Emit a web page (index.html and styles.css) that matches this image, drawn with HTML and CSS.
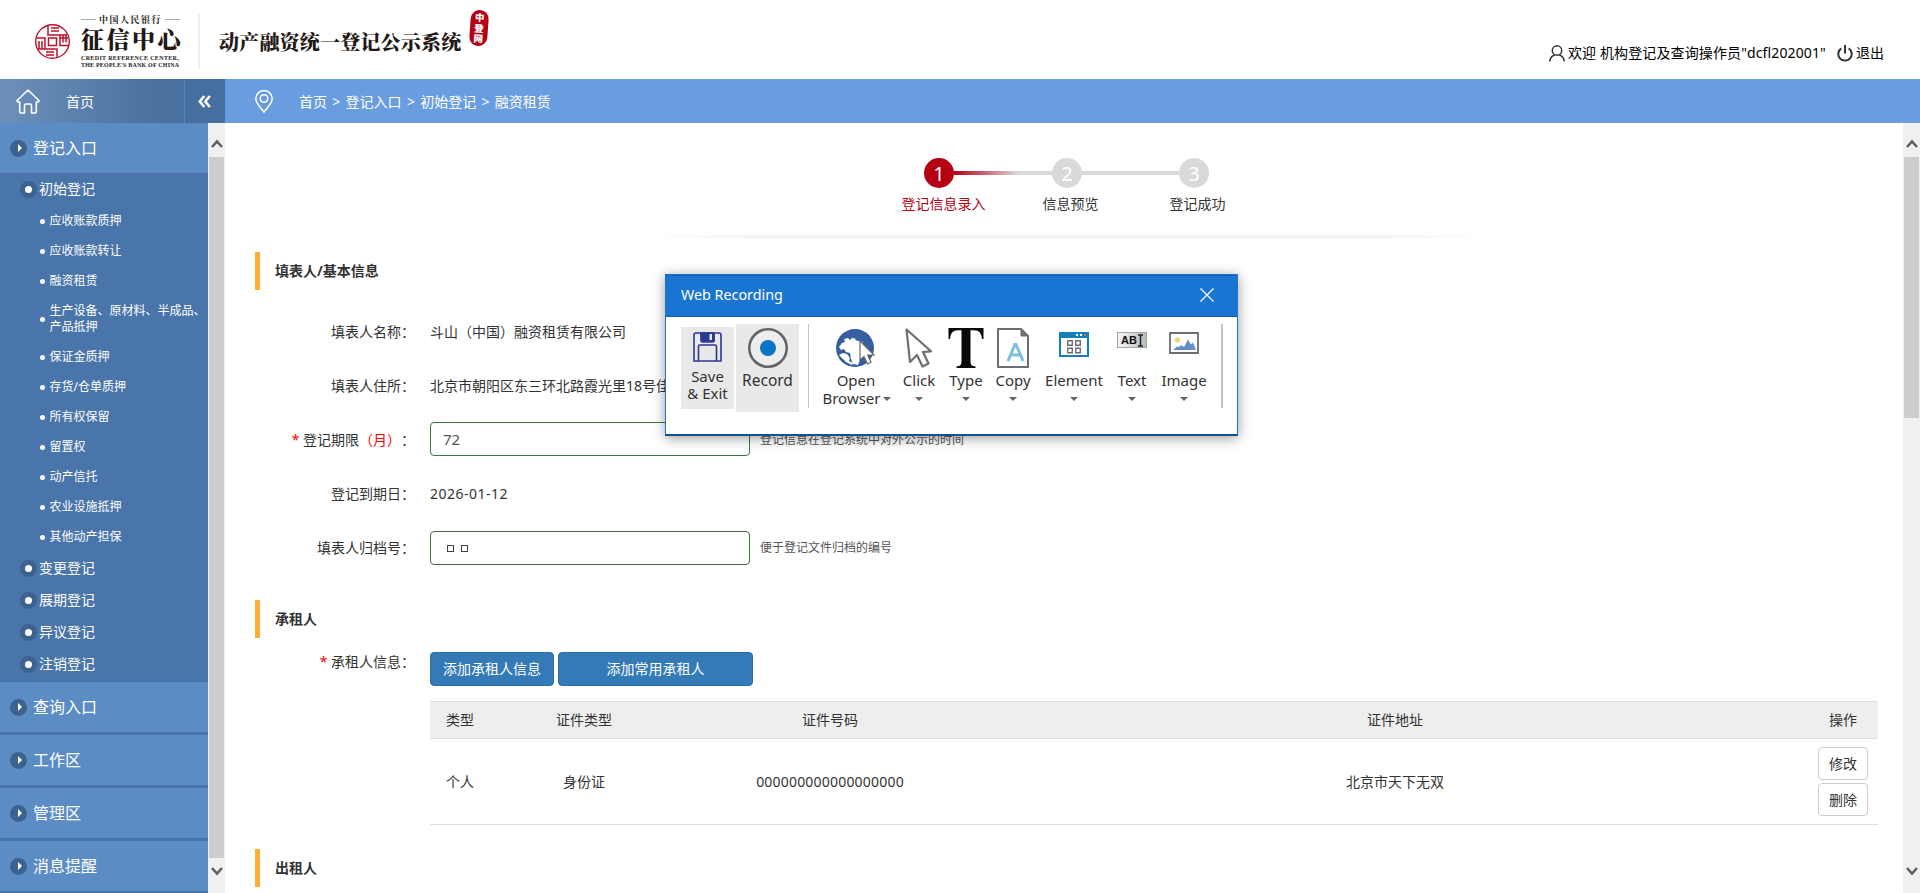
FILE: index.html
```html
<!DOCTYPE html>
<html lang="zh-CN">
<head>
<meta charset="utf-8">
<title>动产融资统一登记公示系统</title>
<link rel="stylesheet" href="styles.css">
</head>
<body>
<header class="header">
  <svg class="emblem" width="36" height="36" viewBox="0 0 36 36" fill="none" stroke="#b8132b" stroke-width="1.5">
    <circle cx="17.500" cy="17.500" r="16.800" stroke-width="1.400"/>
    <path d="M13.500 14h8v7.500h-8zM13 1.500V11h19M16 4h8M16 7h8M22 33.500V25H3M11 28h8M11 31h8M1.500 14H10v11M4 17v7.500M7 17v7.500M33.500 21.500H25V11M31 18.500V11.500M28 18.500V11.500M25 14h8"/>
  </svg>
  <div class="brand">
    <div class="brand-top"><i></i><span>中国人民银行</span><i></i></div>
    <div class="brand-name">征信中心</div>
    <div class="brand-en"><span class="en1">CREDIT REFERENCE CENTER,</span><span class="en2">THE PEOPLE'S BANK OF CHINA</span></div>
  </div>
  <div class="brand-line"></div>
  <h1 class="system">动产融资统一登记公示系统</h1>
  <div class="seal"><span>中</span><span>登</span><span>网</span></div>
  <div class="user">
    <svg width="16" height="17" viewBox="0 0 16 17" fill="none" stroke="#333" stroke-width="1.5"><circle cx="8" cy="5.500" r="4.700"/><path d="M.8 16.500c.3-3.600 2.200-5.700 5-6.700M15.200 16.500c-.3-3.600-2.200-5.700-5-6.700"/></svg>
    <span class="welcome">欢迎 机构登记及查询操作员"dcfl202001"</span>
    <svg class="power" width="16" height="17" viewBox="0 0 16 17" fill="none" stroke="#333" stroke-width="2"><path d="M4.300 3.300a6.700 6.700 0 1 0 7.400 0M8 0v8.500"/></svg>
    <span>退出</span>
  </div>
</header>
<div class="topbar">
  <div class="home">
    <svg width="25" height="25" viewBox="0 0 25 25" fill="none" stroke="#fff" stroke-width="1.600" stroke-linejoin="round"><path d="M12 1L.9 11.800c0 1 1 1.500 2.800 1.200v9.500c0 .8.500 1.500 1.500 1.500h3.300v-7.500c0-1 .5-1.500 1.500-1.500h4c1 0 1.500.5 1.500 1.500V24h3.300c1 0 1.500-.7 1.500-1.500V13c1.800.3 2.800-.2 2.800-1.200z"/></svg>
    <span>首页</span>
  </div>
  <div class="collapse"><svg width="13" height="13" viewBox="0 0 13 13" fill="none" stroke="#fff" stroke-width="2.600"><path d="M6.300 1L1.800 6.500l4.500 5.500M11.800 1L7.300 6.500l4.500 5.500"/></svg></div>
  <nav class="crumbs">
    <svg width="18" height="23" viewBox="0 0 18 23" fill="none" stroke="#fff" stroke-width="1.500"><path d="M9 22C6 18 .8 13.500.8 8.800a8.200 8.200 0 0 1 16.400 0C17.200 13.500 12 18 9 22z"/><circle cx="9" cy="8.500" r="3.800"/></svg>
    <span>首页</span><b>&gt;</b><span>登记入口</span><b>&gt;</b><span>初始登记</span><b>&gt;</b><span>融资租赁</span>
  </nav>
</div>
<div class="body">
  <aside class="side">
    <div class="group"><i class="arrow"></i>登记入口</div>
    <div class="sub">
      <div class="item"><i class="dot"></i>初始登记</div>
      <ul class="leafs">
        <li>应收账款质押</li><li>应收账款转让</li><li>融资租赁</li>
        <li class="two">生产设备、原材料、半成品、<br>产品抵押</li>
        <li>保证金质押</li><li>存货/仓单质押</li><li>所有权保留</li><li>留置权</li><li>动产信托</li><li>农业设施抵押</li><li>其他动产担保</li>
      </ul>
      <div class="item"><i class="dot"></i>变更登记</div>
      <div class="item"><i class="dot"></i>展期登记</div>
      <div class="item"><i class="dot"></i>异议登记</div>
      <div class="item"><i class="dot"></i>注销登记</div>
    </div>
    <div class="group gap"><i class="arrow"></i>查询入口</div>
    <div class="group gap"><i class="arrow"></i>工作区</div>
    <div class="group gap"><i class="arrow"></i>管理区</div>
    <div class="group gap"><i class="arrow"></i>消息提醒</div>
  </aside>
  <div class="scroll">
    <svg width="12" height="10" viewBox="0 0 12 10" fill="none" stroke="#606060" stroke-width="2.600"><path d="M1 8l5-5.500L11 8"/></svg>
    <div class="thumb"></div>
    <svg class="down" width="12" height="10" viewBox="0 0 12 10" fill="none" stroke="#606060" stroke-width="2.600"><path d="M1 2l5 5.500L11 2"/></svg>
  </div>
  <main class="main">
    <div class="steps">
      <div class="track"><b class="on">1</b><i class="fade"></i><b>2</b><i></i><b>3</b></div>
      <div class="names"><span class="red">登记信息录入</span><span>信息预览</span><span>登记成功</span></div>
    </div>
    <div class="shade"></div>
    <h2 class="section">填表人/基本信息</h2>
    <div class="form">
      <div class="row"><label>填表人名称：</label><span>斗山（中国）融资租赁有限公司</span></div>
      <div class="row"><label>填表人住所：</label><span>北京市朝阳区东三环北路霞光里18号佳</span></div>
      <div class="row"><label><em>*</em> 登记期限<em>（月）</em>：</label><div class="input up">72</div><small>登记信息在登记系统中对外公示的时间</small></div>
      <div class="row"><label>登记到期日：</label><span class="date">2026-01-12</span></div>
      <div class="row"><label>填表人归档号：</label><div class="input"><i class="box"></i><i class="box"></i></div><small>便于登记文件归档的编号</small></div>
    </div>
    <h2 class="section second">承租人</h2>
    <div class="tenant">
      <label><em>*</em> 承租人信息：</label>
      <div class="tenant-body">
        <div class="buttons"><div class="btn">添加承租人信息</div><div class="btn wide">添加常用承租人</div></div>
        <div class="table">
          <div class="tr head"><span>类型</span><span>证件类型</span><span>证件号码</span><span>证件地址</span><span>操作</span></div>
          <div class="tr"><span>个人</span><span>身份证</span><span class="num">000000000000000000</span><span>北京市天下无双</span><div class="ops"><div>修改</div><div>删除</div></div></div>
        </div>
      </div>
    </div>
    <h2 class="section third">出租人</h2>
  </main>
  <div class="scroll right">
    <svg width="12" height="10" viewBox="0 0 12 10" fill="none" stroke="#606060" stroke-width="2.600"><path d="M1 8l5-5.500L11 8"/></svg>
    <div class="thumb"></div>
    <svg class="down" width="12" height="10" viewBox="0 0 12 10" fill="none" stroke="#606060" stroke-width="2.600"><path d="M1 2l5 5.500L11 2"/></svg>
  </div>
</div>
<div class="popup">
  <div class="title"><span>Web Recording</span><svg width="14" height="14" viewBox="0 0 14 14" stroke="#fff" stroke-width="1.200"><path d="M.5.500l13 13M13.500.500l-13 13"/></svg></div>
  <div class="tools">
    <div class="tool save">
      <svg width="29" height="30" viewBox="0 0 29 30" fill="none" stroke="#2b3990" stroke-width="1.600"><path d="M3 1h23a2 2 0 0 1 2 2V29H1V3a2 2 0 0 1 2-2zM8 1v7.500a1.500 1.500 0 0 0 1.500 1.500h10a1.500 1.500 0 0 0 1.500-1.500V1M5.500 29V14.500a1.500 1.500 0 0 1 1.500-1.500h15a1.500 1.500 0 0 1 1.500 1.500V29"/><path d="M8 1h13v8H9z" fill="#2b3990"/><path d="M16.500 2h2.500v6h-2.500z" fill="#e9e9e9" stroke="none"/></svg>
      <span>Save</span><span>&amp; Exit</span>
    </div>
    <div class="tool record">
      <svg width="40" height="40" viewBox="0 0 40 40"><circle cx="20" cy="20" r="18.700" fill="#ededed" stroke="#666" stroke-width="2.600"/><circle cx="20" cy="20" r="8" fill="#0a74c4"/></svg>
      <span>Record</span>
    </div>
    <div class="sep"></div>
    <div class="tool t-open">
      <svg width="40" height="40" viewBox="0 0 40 40"><circle cx="19" cy="20" r="19" fill="#355f9e"/><path d="M3 19l3-4 3-1-1-3 4-1 2 2 2-2 3 .500 1 2 3 .500 4 1v3l-3 1 1 7-1 7-2 5-5-1-2-5-1-6-4-1-2-3-3 1zM3 27l4-2 4 1 3 4-1 3 4 2-1 2-6-3z" fill="#fff"/><path d="M24 13v19l4-3.500 3.500 7.500 3.500-1.700-3.300-7.300H38z" fill="#fff" stroke="#666" stroke-width="1.200"/></svg>
      <span>Open</span><span class="withcaret">Browser<i class="caret"></i></span>
    </div>
    <div class="tool t-click">
      <svg width="40" height="40" viewBox="0 0 40 40"><path d="M7.500 1.500L11 34l7-7 5.500 11.500 6-3-5.500-11.500 8-.700z" fill="#fff" stroke="#6d6e71" stroke-width="2.200" stroke-linejoin="round"/></svg>
      <span>Click</span><i class="caret"></i>
    </div>
    <div class="tool t-type">
      <svg width="40" height="40" viewBox="0 0 40 40"><path d="M2.500 0h35v11h-1.500c-.7-6-3-8.700-8-8.700h-3.500V33c0 4 1.500 5.200 5 5.500V40h-19v-1.500c3.500-.3 5-1.500 5-5.500V2.300H12C7 2.300 4.700 5 4 11H2.500z" fill="#0a0a0a"/></svg>
      <span>Type</span><i class="caret"></i>
    </div>
    <div class="tool t-copy">
      <svg width="40" height="40" viewBox="0 0 40 40"><path d="M5 1h23l7 7v31H5z" fill="#fff" stroke="#6d6e71" stroke-width="2"/><path d="M28 1v7h7z" fill="#6d6e71" stroke="#6d6e71"/><path d="M15 33l7-16.500h1L30 33M17.500 27h10" fill="none" stroke="#7bbde3" stroke-width="3"/></svg>
      <span>Copy</span><i class="caret"></i>
    </div>
    <div class="tool t-elem">
      <svg width="40" height="40" viewBox="0 0 40 40"><path d="M6 5h28v23H6z" fill="#fff" stroke="#1180b8" stroke-width="2"/><path d="M5 4h30v6H5z" fill="#1180b8"/><path d="M22 6h2v2h-2zM26 6h2v2h-2z" fill="#fff"/><path d="M30 6h2v2h-2z" fill="#f15a60"/><path d="M13.700 12.700h4.600v4.600h-4.600zM21.700 12.700h4.600v4.600h-4.600zM13.700 20.200h4.600v4.600h-4.600zM21.700 20.200h4.600v4.600h-4.600z" fill="none" stroke="#6d6e71" stroke-width="1.400"/></svg>
      <span>Element</span><i class="caret"></i>
    </div>
    <div class="tool t-text">
      <div class="abi"><b>AB</b><svg width="5" height="13" viewBox="0 0 5 13" fill="none" stroke="#222" stroke-width="1.500"><path d="M0 1h5M0 12h5M2.500 1v11"/></svg></div>
      <span>Text</span><i class="caret"></i>
    </div>
    <div class="tool t-image">
      <svg width="40" height="40" viewBox="0 0 40 40"><path d="M6 5h28v20H6z" fill="#fff" stroke="#6d6e71" stroke-width="1.800"/><circle cx="13.500" cy="12" r="2.600" fill="#edd56b"/><path d="M9 22l4-3.500 2 .500 2-2 3 2 4-7.500 3 5 2-2 3 7.500z" fill="#5f90cc"/></svg>
      <span>Image</span><i class="caret"></i>
    </div>
    <div class="sep end"></div>
  </div>
</div>
</body>
</html>
```

FILE: styles.css
```css
* { box-sizing: border-box; }
body {
  margin: 0; height: 893px; overflow: hidden; background: #fff; color: #333;
  font: 14px/20px "Noto Sans", "Noto Sans CJK SC", sans-serif;
  text-spacing-trim: space-all;
}
svg { display: block; flex: none; }
i, em { font-style: normal; }
h1, h2, ul { margin: 0; padding: 0; }

.header { height: 79px; display: flex; align-items: flex-start; padding-left: 35px; color: #231815; white-space: nowrap; }
.emblem { margin-top: 24px; }
.brand { width: 99px; margin: 13px 0 0 10px; }
.brand-top { display: flex; align-items: center; justify-content: space-between; height: 13px; font: bold 9px/13px "Noto Serif CJK SC", "Noto Sans CJK SC", sans-serif; letter-spacing: 1.5px; }
.brand-top i { width: 15px; height: 1px; background: #aaa; }
.brand-name { height: 28px; font: 900 23px/26px "Noto Serif CJK SC", "Noto Sans CJK SC", sans-serif; letter-spacing: 2.500px; }
.brand-en { display: flex; flex-direction: column; font: bold 6px/7px "Liberation Serif", serif; margin-top: 1px; }
.en1 { letter-spacing: .35px; }
.en2 { letter-spacing: .2px; }
.brand-line { width: 2px; height: 56px; background: #eee; margin: 13px 0 0 18px; }
.system { font: 900 20px/30px "Noto Serif CJK SC", "Noto Sans CJK SC", sans-serif; letter-spacing: .2px; margin: 27px 0 0 19px; width: 241px; }
.seal { width: 18px; height: 36px; margin: 10px 0 0 10px; border-radius: 9px; background: #b60014; color: #fff; display: flex; flex-direction: column; align-items: center; padding-top: 2px; transform: rotate(4deg); }
.seal span { font: 900 9.500px/10.500px "Noto Sans CJK SC", sans-serif; }
.user { display: flex; align-items: center; margin: 43px 36px 0 auto; color: #000; height: 20px; }
.welcome { width: 258px; margin-left: 3px; letter-spacing: .12px; }
.power { margin: 0 3px 0 11px; }

.topbar { height: 44px; display: flex; background: #699de0; color: #fff; }
.home { width: 184px; display: flex; align-items: center; padding-left: 16px; background: linear-gradient(90deg, #6d90ba, #4a719f 85%); }
.home span { margin: 1px 0 0 25px; }
.collapse { width: 41px; background: #466e9f; border-left: 1px solid #5a86b8; display: flex; align-items: center; padding-left: 13px; }
.crumbs { display: flex; align-items: center; padding: 1px 0 0 30px; }
.crumbs svg { margin: -1px 26px 0 0; }
.crumbs b { width: 18.600px; text-align: center; font-weight: normal; }

.body { display: flex; height: 770px; }
.side { width: 208px; background: #4a75aa; color: #fff; overflow: hidden; flex: none; }
.group { height: 50px; background: #5c8cc4; display: flex; align-items: center; padding-left: 10px; font-size: 16px; }
.gap { margin-bottom: 3px; }
.arrow, .dot { width: 17px; height: 17px; border-radius: 50%; background: #3c628f; display: flex; align-items: center; justify-content: center; flex: none; }
.arrow { margin-right: 6px; }
.arrow::after { content: ""; border: solid transparent; border-width: 4px 0 4px 4px; border-left-color: #fff; margin-left: 2px; }
.dot { margin-right: 2px; }
.dot::after { content: ""; width: 7px; height: 7px; border-radius: 50%; background: #fff; }
.sub { padding: 0 0 2px; height: 509px; }
.item { height: 32px; display: flex; align-items: center; padding-left: 20px; }
.leafs { list-style: none; font-size: 12px; line-height: 16px; padding-top: 1px; }
.leafs li { height: 30px; display: flex; align-items: center; padding-left: 40px; white-space: nowrap; }
.leafs li::before { content: ""; width: 5px; height: 5px; border-radius: 50%; background: #fff; margin-right: 4.500px; flex: none; }
.leafs .two { height: 46px; }

.scroll { width: 17px; flex: none; background: #f0f0f0; display: flex; flex-direction: column; align-items: center; padding-top: 16px; }
.thumb { width: 15px; height: 701px; margin-top: 8px; background: #cdcdcd; }
.down { margin-top: 8px; }
.right { margin-left: auto; }
.right .thumb { height: 261px; }
.right .down { margin-top: 448px; }

.main { width: 1678px; flex: none; padding-left: 30px; }
.steps { padding: 35px 0 0 647px; }
.track { display: flex; align-items: center; margin-left: 22px; }
.track b { width: 30px; height: 30px; border-radius: 50%; background: #d9d9d9; color: #fff; font: 20px/31px "Noto Sans", sans-serif; text-align: center; }
.track .on { background: #b60014; }
.track i { width: 97px; height: 4px; background: #d9d9d9; }
.track .fade { width: 98px; background: linear-gradient(90deg, #b60014, #d9d9d9 66%); }
.names { display: flex; margin: 6px 0 0 -.500px; }
.names span { width: 56px; margin-left: 71px; }
.names .red { width: 84px; margin: 0 -14px 0 0; color: #b60014; }
.shade { width: 830px; height: 5px; margin: 19px 0 0 397px; background: linear-gradient(90deg, #fff, transparent 12%, transparent 88%, #fff), linear-gradient(#fff, #eee); }
.section { height: 38px; border-left: 5px solid #ffad33; padding-left: 15px; margin-top: 14px; font-size: 14px; line-height: 38px; }
.form { margin-top: 15px; }
.row { height: 54px; display: flex; align-items: center; }
label { width: 160px; text-align: right; margin-right: 15px; white-space: nowrap; flex: none; }
em { color: #f00; }
.input { width: 320px; height: 34px; border: 1px solid #3c763d; border-radius: 4px; display: flex; align-items: center; padding-left: 12px; color: #555; font-size: 15px; }
.up { margin-top: -2px; }
.box { width: 7px; height: 7px; border: 1px solid #444; margin: 0 3px 0 4px; }
small { font-size: 12px; margin-left: 10px; color: #555; }
.date { letter-spacing: .5px; }
.second { margin-top: 25px; }
.tenant { display: flex; align-items: flex-start; padding-top: 14px; }
.tenant label { line-height: 20px; }
.tenant-body { width: 1448px; }
.buttons { display: flex; gap: 4px; }
.btn { width: 124px; height: 34px; border: 1px solid #2e6da4; border-radius: 4px; background: #337ab7; color: #fff; text-align: center; line-height: 32px; }
.wide { width: 195px; }
.table { margin-top: 15px; }
.tr { display: grid; grid-template-columns: 60px 188px 304px 826px 70px; align-items: center; text-align: center; height: 86px; border-bottom: 1px solid #ddd; }
.head { height: 38px; background: #eee; border-top: 1px solid #ddd; }
.num { letter-spacing: .2px; }
.ops { display: flex; flex-direction: column; align-items: center; gap: 3px; }
.ops div { width: 50px; height: 33px; border: 1px solid #ccc; border-radius: 4px; line-height: 32px; }
.third { margin-top: 24px; }

.popup { position: absolute; left: 665px; top: 274px; width: 573px; height: 162px; background: #fff; border: 1px solid #1a75d2; border-bottom: 2px solid #0e5296; box-shadow: 0 2px 12px rgba(0,0,0,.4); font-family: "Noto Sans", sans-serif; }
.title { height: 42px; background: #1a75d2; border-bottom: 1px solid #125ba9; border-top: 1px solid #1560b0; color: #fff; display: flex; align-items: center; justify-content: space-between; padding: 0 23px 3px 15px; font-size: 14.300px; }
.tools { display: flex; align-items: flex-start; padding: 7px 0 0 15px; font-size: 15px; line-height: 18px; }
.tool { display: flex; flex-direction: column; align-items: center; padding-top: 4px; flex: none; white-space: nowrap; }
.tool span { margin-top: 3px; }
.tool span + span { margin-top: 0; }
.save { width: 53px; height: 82px; margin: 3px 2px 0 0; padding-top: 5px; background: #e9e9e9; line-height: 17px; }
.save span { margin-top: 6px; }
.record { width: 63px; height: 88px; background: #e9e9e9; font-size: 15.500px; }
.sep { width: 1px; height: 84px; background: #c4c4c4; margin: 0 0 0 9px; }
.t-open { width: 84px; margin-left: 5px; }
.withcaret { position: relative; margin-left: -9px; }
.caret { border: solid transparent; border-width: 4px 4px 0; border-top-color: #666; margin-top: 8px; }
.withcaret .caret { position: absolute; right: -10px; top: 0; }
.t-click { width: 44px; margin-left: -1px; }
.t-type { width: 48px; margin-left: 1px; }
.t-copy { width: 46px; }
.t-elem { width: 70px; margin-left: 3px; }
.t-text { width: 48px; margin-left: -1px; }
.t-image { width: 54px; margin-left: 1px; }
.abi { width: 30px; height: 16px; margin: 4px 0 20px; border: 1px solid #a5a69c; background: linear-gradient(90deg, #f5f5f5, #bbb); display: flex; align-items: center; justify-content: center; gap: 1px; color: #111; font: bold 11px/14px "Liberation Sans", sans-serif; }
.end { width: 2px; margin-left: 10px; }
```
